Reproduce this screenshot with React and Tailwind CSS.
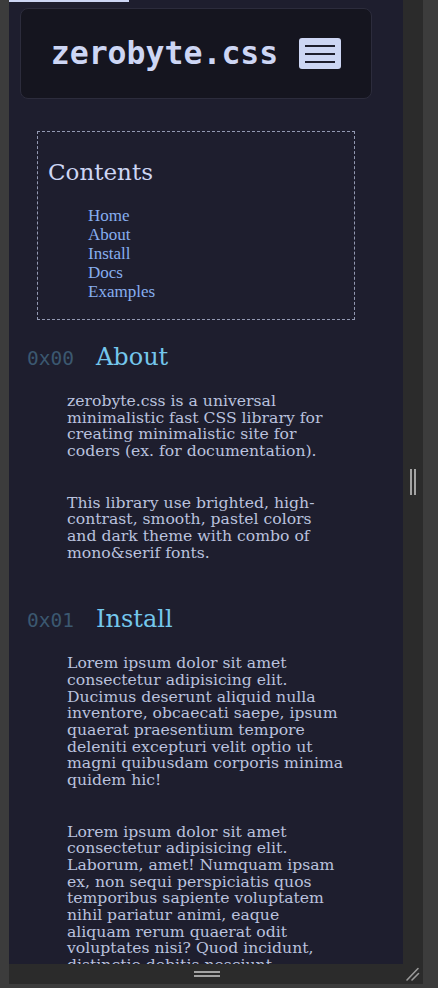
const serif = { fontFamily: '"DejaVu Serif", serif' };

const sections = [
  {
    id: "0x00",
    title: "About",
    paras: [
      "zerobyte.css is a universal minimalistic fast CSS library for creating minimalistic site for coders (ex. for documentation).",
      "This library use brighted, high-contrast, smooth, pastel colors and dark theme with combo of mono&serif fonts.",
    ],
  },
  {
    id: "0x01",
    title: "Install",
    paras: [
      "Lorem ipsum dolor sit amet consectetur adipisicing elit. Ducimus deserunt aliquid nulla inventore, obcaecati saepe, ipsum quaerat praesentium tempore deleniti excepturi velit optio ut magni quibusdam corporis minima quidem hic!",
      "Lorem ipsum dolor sit amet consectetur adipisicing elit. Laborum, amet! Numquam ipsam ex, non sequi perspiciatis quos temporibus sapiente voluptatem nihil pariatur animi, eaque aliquam rerum quaerat odit voluptates nisi? Quod incidunt, distinctio debitis nesciunt, voluptatibus dolorum aspernatur.",
    ],
  },
];

const links = ["Home", "About", "Install", "Docs", "Examples"];

function Section({ id, title, paras, first }) {
  return (
    <section className={first ? "mt-[22px]" : "mt-[43px]"}>
      <h2 className="flex items-baseline pl-[18px] leading-[30px]">
        <span className="font-['DejaVu_Sans_Mono',monospace] text-[19.5px] text-[#3b5870] w-[47px]">
          {id}
        </span>
        <span className="ml-[22px] text-[24px] text-[#74c7ec]" style={serif}>
          {title}
        </span>
      </h2>
      <div className="pl-[58px] w-[336px]">
        {paras.map((p, i) => (
          <p
            key={i}
            className={`${i === 0 ? "mt-[19px]" : "mt-[35px]"} text-[15.65px] leading-[16.67px] text-[#bac2de]`}
            style={serif}
          >
            {p}
          </p>
        ))}
      </div>
    </section>
  );
}

export default function App() {
  return (
    <div className="w-[438px] h-[988px] bg-[#3c3c3c] pl-[9px] overflow-hidden">
      <div className="flex h-[964px]">
        {/* page */}
        <div className="w-[394px] h-full bg-[#1e1e2e] overflow-hidden">
          <div className="h-[2px] w-[120px] bg-[#cdd6f4]" />

          <header className="mt-[6px] ml-[11px] w-[352px] h-[91px] rounded-[8px] border border-[#2c2c3c] bg-[#15151f] flex items-center justify-center gap-[21px]">
            <span className="font-['DejaVu_Sans_Mono',monospace] font-bold text-[31.5px] leading-none text-[#cdd6f4]">
              zerobyte.css
            </span>
            <button
              type="button"
              className="w-[42px] h-[31px] rounded-[3px] bg-[#cdd6f4] flex flex-col items-center justify-center gap-[6px]"
            >
              <span className="block w-[30px] h-[2px] bg-[#1e1e2e]" />
              <span className="block w-[30px] h-[2px] bg-[#1e1e2e]" />
              <span className="block w-[30px] h-[2px] bg-[#1e1e2e]" />
            </button>
          </header>

          <nav className="mt-[32px] ml-[28px] w-[318px] border border-dashed border-[#9399b2] pt-[26px] pb-[18px] pl-[10px]">
            <h3 className="text-[23px] leading-[28px] text-[#cdd6f4]" style={serif}>
              Contents
            </h3>
            <ul className="mt-[20px] pl-[40px]">
              {links.map((l) => (
                <li key={l} className="font-['Liberation_Serif',serif] text-[17px] leading-[19px]">
                  <a href="#" className="text-[#87aef0]">{l}</a>
                </li>
              ))}
            </ul>
          </nav>

          {sections.map((s, i) => (
            <Section key={s.id} first={i === 0} {...s} />
          ))}
        </div>

        {/* side handle */}
        <div className="w-[20px] h-full bg-[#2b2b2b] flex items-center justify-center gap-[2px]">
          <span className="block w-[2px] h-[26px] bg-[#a3a3a3]" />
          <span className="block w-[2px] h-[26px] bg-[#a3a3a3]" />
        </div>
      </div>

      {/* bottom handle */}
      <div className="flex h-[20px] w-[414px] bg-[#2b2b2b]">
        <div className="w-[394px] pl-[2px] flex flex-col items-center justify-center gap-[2px]">
          <span className="block w-[26px] h-[2px] bg-[#a3a3a3]" />
          <span className="block w-[26px] h-[2px] bg-[#a3a3a3]" />
        </div>
        <div className="w-[20px] flex items-center justify-center">
          <svg width="20" height="20" viewBox="0 0 20 20" fill="none" stroke="#9a9a9a" strokeWidth="1.6" strokeLinecap="round">
            <line x1="4" y1="16" x2="15" y2="4.5" />
            <line x1="9" y1="16" x2="15.5" y2="9.5" />
          </svg>
        </div>
      </div>
    </div>
  );
}
